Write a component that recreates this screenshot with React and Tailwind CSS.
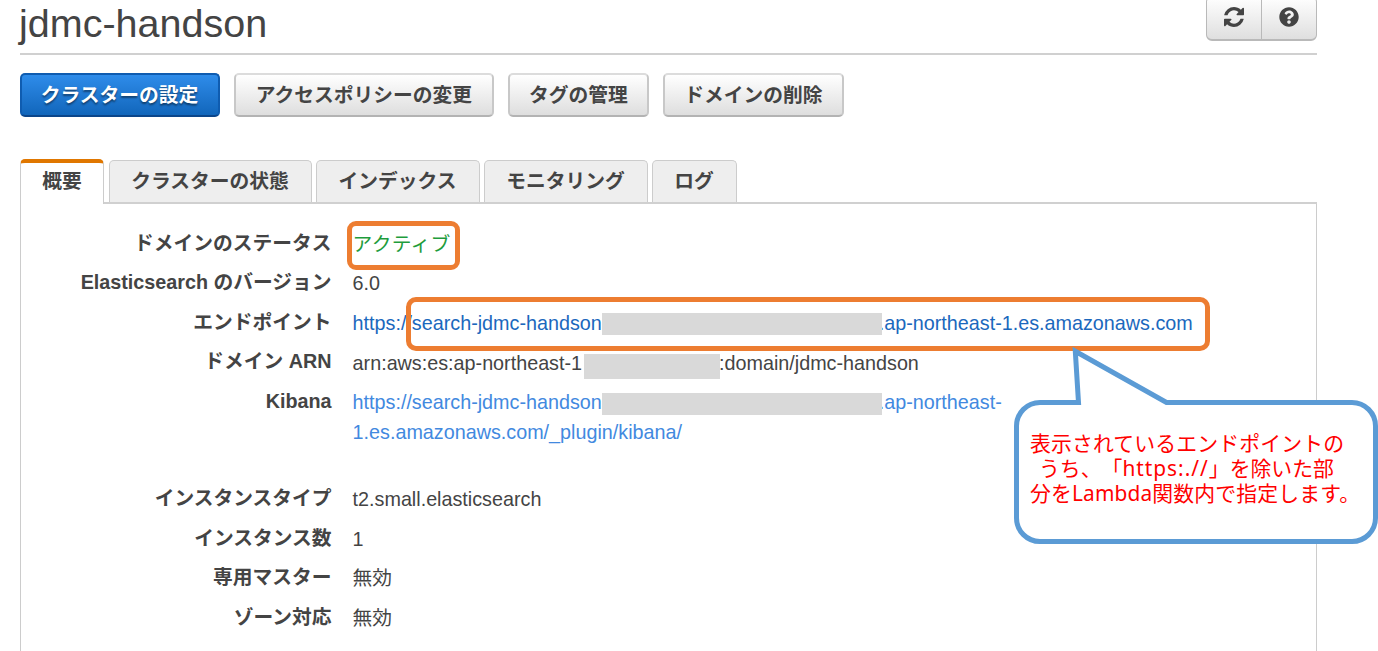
import React from "react";
import { FaQuestionCircle } from "react-icons/fa";

const ACTIONS = [
  { label: "アクセスポリシーの変更", box: "w-[260px]" },
  { label: "タグの管理", box: "w-[141px]" },
  { label: "ドメインの削除", box: "w-[181px]" },
];

const TABS = [
  { label: "クラスターの状態", box: "w-[203px]" },
  { label: "インデックス", box: "w-[164px]" },
  { label: "モニタリング", box: "w-[164px]" },
  { label: "ログ", box: "w-[85px]" },
];

function RefreshIcon() {
  return (
    <svg width="20" height="20" viewBox="0 0 1536 1536" fill="currentColor">
      <path d="M1511 928q0 5-1 7-64 268-268 434.500t-478 166.500q-146 0-282.500-55t-243.500-157l-129 129q-19 19-45 19t-45-19-19-45v-448q0-26 19-45t45-19h448q26 0 45 19t19 45-19 45l-137 137q71 66 161 102t187 36q134 0 250-65t186-179q11-17 53-117 8-23 30-23h192q13 0 22.500 9.500t9.500 22.500zM1536 128v448q0 26-19 45t-45 19h-448q-26 0-45-19t-19-45 19-45l138-138q-148-137-349-137-134 0-250 65t-186 179q-11 17-53 117-8 23-30 23h-199q-13 0-22.500-9.500t-9.500-22.500v-7q65-268 270-434.500t480-166.500q146 0 284 55.500t245 156.500l130-129q19-19 45-19t45 19 19 45z" />
    </svg>
  );
}

function Redacted({ className }) {
  return <span className={`relative shrink-0 bg-[#d9d9d9] ${className}`} />;
}

function Row({ label, children, className = "h-[39.5px]" }) {
  return (
    <div className={`flex ${className}`}>
      <dt className="w-[310.6px] shrink-0 text-right font-bold">{label}</dt>
      <dd className="ml-[21px] pt-px">{children}</dd>
    </div>
  );
}

function Callout() {
  return (
    <div className="absolute left-[1014px] top-[346px] h-[200px] w-[364px]">
      <svg className="absolute inset-0" width="364" height="200" viewBox="0 0 364 200">
        <path
          d="M26 56.500H64.500L61.300 5.200L152.500 56.500H338A23.500 23.500 0 0 1 361.500 80V172A23.500 23.500 0 0 1 338 195.500H26A23.500 23.500 0 0 1 2.500 172V80A23.500 23.500 0 0 1 26 56.500Z"
          fill="#fff"
          stroke="#5b9bd5"
          strokeWidth="5"
        />
      </svg>
      <div className="relative pt-[85px] pl-[16px] font-['Noto_Sans','Noto_Sans_CJK_JP',sans-serif] text-[20.85px] leading-[25px] whitespace-nowrap text-[#ff0000] [text-spacing-trim:space-all]">
        <p className="tracking-[0.15px]">表示されているエンドポイントの</p>
        <p className="pl-[9px]">
          うち、「<span className="tracking-[1px]">https:.//</span>」を除いた部
        </p>
        <p className="tracking-[0.15px]">分をLambda関数内で指定します。</p>
      </div>
    </div>
  );
}

export default function App() {
  return (
    <div className="relative h-[651px] w-[1378px] overflow-hidden bg-white pl-[20px] font-['Liberation_Sans','Noto_Sans_CJK_JP',sans-serif] text-[19.75px] text-[#444]">
      <header className="flex h-[55px] w-[1297px] justify-between border-b-2 border-[#d0d0d0]">
        <h1 className="-ml-px text-[39.5px] leading-[46px] text-[#444]">jdmc-handson</h1>
        <div className="-mt-1 flex h-[45px] w-[111px] rounded-[6px] border-[1.5px] border-b-2 border-[#b9b9b9] bg-linear-to-b from-white to-[#dfdfdf] text-[#444]">
          <button className="flex w-[55px] items-center justify-center border-r border-[#b9b9b9] pb-[2px]">
            <RefreshIcon />
          </button>
          <button className="flex flex-1 items-center justify-center pb-[2px]">
            <FaQuestionCircle size={20} />
          </button>
        </div>
      </header>

      <div className="mt-[18px] flex gap-[14px] font-bold leading-[41px]">
        <button className="h-[44px] w-[200px] rounded-[5px] border-2 border-[#0f5cb0] border-b-[#0b458a] bg-linear-to-b from-[#2e8cea] to-[#1166bb] pr-px pb-[2px] text-white [text-shadow:0_2px_2px_rgba(0,0,0,0.45)]">
          クラスターの設定
        </button>
        {ACTIONS.map((a) => (
          <button
            key={a.label}
            className={`h-[44px] rounded-[5px] border-2 border-[#c8c8c8] border-t-[#dcdcdc] border-b-[#b3b3b3] bg-linear-to-b from-white to-[#dedede] pb-[2px] ${a.box}`}
          >
            {a.label}
          </button>
        ))}
      </div>

      <nav className="relative mt-[42px] flex h-[45px] gap-[4px] text-center font-bold leading-[41px]">
        <div className="mr-px h-[45px] w-[84px] rounded-t-[5px] border-x-[1.5px] border-t-4 border-x-[#ccc] border-t-[#e07700] bg-white leading-[37px]">
          概要
        </div>
        {TABS.map((t) => (
          <div
            key={t.label}
            className={`mt-px h-[42px] rounded-t-[5px] border-[1.5px] border-b-0 border-[#ccc] bg-[#eee] pr-px leading-[40px] ${t.box}`}
          >
            {t.label}
          </div>
        ))}
      </nav>

      <main className="-mt-[2px] w-[1297px]">
        <div className="flex h-[2px]">
          <div className="w-[83px] border-l-[1.5px] border-[#ccc]" />
          <div className="flex-1 bg-[#d0d0d0]" />
        </div>
        <dl className="h-[460px] border-x-[1.5px] border-[#ccc] pt-[23.6px] leading-[30px]">
          <Row label="ドメインのステータス">
            <span className="tracking-[0.3px] text-[#1e9c3c]">アクティブ</span>
          </Row>
          <Row label="Elasticsearch のバージョン">6.0</Row>
          <Row label="エンドポイント">
            <a className="flex items-center text-[#1b68bd]">
              https://search-jdmc-handson
              <Redacted className="mt-[3px] h-[22px] w-[280px]" />
              <span className="-ml-[3px]">.ap-northeast-1.es.amazonaws.com</span>
            </a>
          </Row>
          <Row label="ドメイン ARN">
            <div className="flex items-center">
              arn:aws:es:ap-northeast-1
              <Redacted className="mt-[7px] ml-[2px] h-[25px] w-[136px]" />
              <span className="-ml-px">:domain/jdmc-handson</span>
            </div>
          </Row>
          <Row label="Kibana" className="h-[97.5px]">
            <a className="text-[#4289df]">
              <span className="flex items-center">
                https://search-jdmc-handson
                <Redacted className="mt-[5px] h-[22px] w-[280px]" />
                <span className="-ml-[3px]">.ap-northeast-</span>
              </span>
              <span className="block">1.es.amazonaws.com/_plugin/kibana/</span>
            </a>
          </Row>
          <Row label="インスタンスタイプ">t2.small.elasticsearch</Row>
          <Row label="インスタンス数">1</Row>
          <Row label="専用マスター">無効</Row>
          <Row label="ゾーン対応">無効</Row>
        </dl>
      </main>

      <div className="absolute left-[347px] top-[221px] h-[49px] w-[113px] rounded-[9px] border-5 border-[#ed7d31]" />
      <div className="absolute left-[406px] top-[297px] h-[54px] w-[804px] rounded-[10px] border-5 border-[#ed7d31]" />
      <Callout />
    </div>
  );
}
